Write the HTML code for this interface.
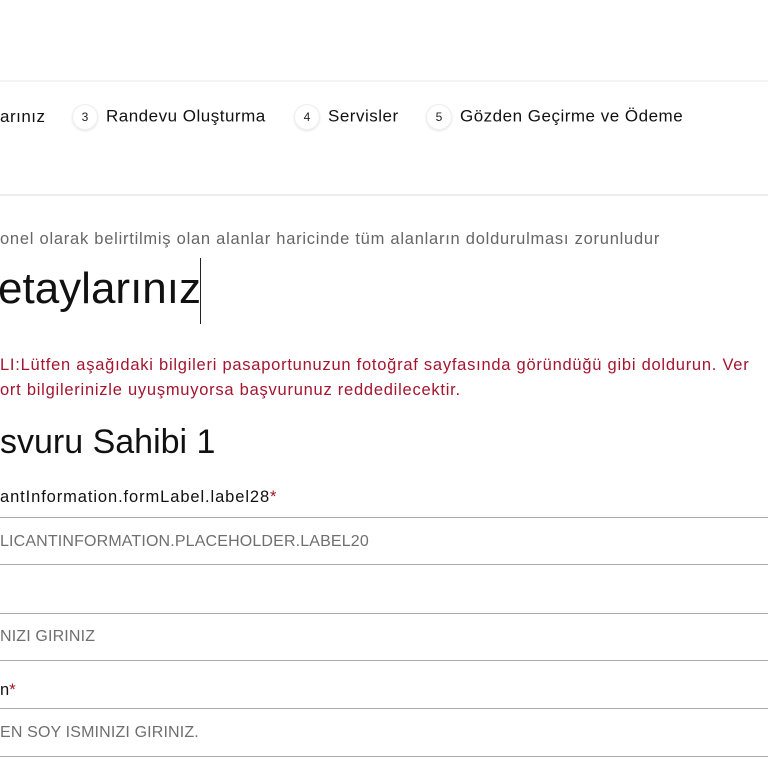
<!DOCTYPE html>
<html><head><meta charset="utf-8"><style>
body{margin:0;width:768px;height:768px;overflow:hidden;background:#fff;font-family:"Liberation Sans",sans-serif;position:relative}
.a{position:absolute;white-space:nowrap}
.line{position:absolute;left:0;width:768px;height:1px;background:#aaa}
.c{display:inline-block;width:24px;height:24px;border-radius:50%;border:1px solid #eee;box-shadow:0 1px 2px #e4e4e4;font-size:12px;text-align:center;line-height:24px;color:#222;vertical-align:middle;margin-right:8px;letter-spacing:0}
.st{font-size:17px;color:#111;top:104px;letter-spacing:0.5px}
.ph{font-size:16px;color:#6f6f6f;letter-spacing:0.15px}
</style></head><body>
<div class="a" style="left:0;top:80px;width:768px;height:2px;background:#f5f5f5"></div>
<div class="a" style="left:0;top:194px;width:768px;height:2px;background:#ececec"></div>
<div class="a st" style="left:0;top:107px">arınız</div>
<div class="a st" style="left:72px"><span class="c">3</span>Randevu Oluşturma</div>
<div class="a st" style="left:294px"><span class="c">4</span>Servisler</div>
<div class="a st" style="left:426px"><span class="c">5</span>Gözden Geçirme ve Ödeme</div>
<div class="a" style="left:0;top:230px;font-size:16.5px;color:#666;letter-spacing:0.75px">onel olarak belirtilmiş olan alanlar haricinde tüm alanların doldurulması zorunludur</div>
<div class="a" style="left:-2px;top:264px;font-size:44px;color:#111">etaylarınız</div>
<div class="a" style="left:200px;top:258px;width:1px;height:66px;background:#222"></div>
<div class="a" style="left:0;top:353px;font-size:16.5px;color:#a4152f;line-height:25px;letter-spacing:0.75px">LI:Lütfen aşağıdaki bilgileri pasaportunuzun fotoğraf sayfasında göründüğü gibi doldurun. Ver<br>ort bilgilerinizle uyuşmuyorsa başvurunuz reddedilecektir.</div>
<div class="a" style="left:0;top:423px;font-size:34px;color:#111">svuru Sahibi 1</div>
<div class="a" style="left:0;top:488px;font-size:16.5px;color:#111;letter-spacing:0.9px">antInformation.formLabel.label28<span style="color:#a4152f">*</span></div>
<div class="line" style="top:517px"></div>
<div class="a ph" style="left:0;top:533px">LICANTINFORMATION.PLACEHOLDER.LABEL20</div>
<div class="line" style="top:564px"></div>
<div class="line" style="top:613px"></div>
<div class="a ph" style="left:0;top:628px">NIZI GIRINIZ</div>
<div class="line" style="top:660px"></div>
<div class="a" style="left:0;top:681px;font-size:16.5px;color:#111">n<span style="color:#a4152f">*</span></div>
<div class="line" style="top:708px"></div>
<div class="a ph" style="left:0;top:724px">EN SOY ISMINIZI GIRINIZ.</div>
<div class="line" style="top:756px"></div>
</body></html>
